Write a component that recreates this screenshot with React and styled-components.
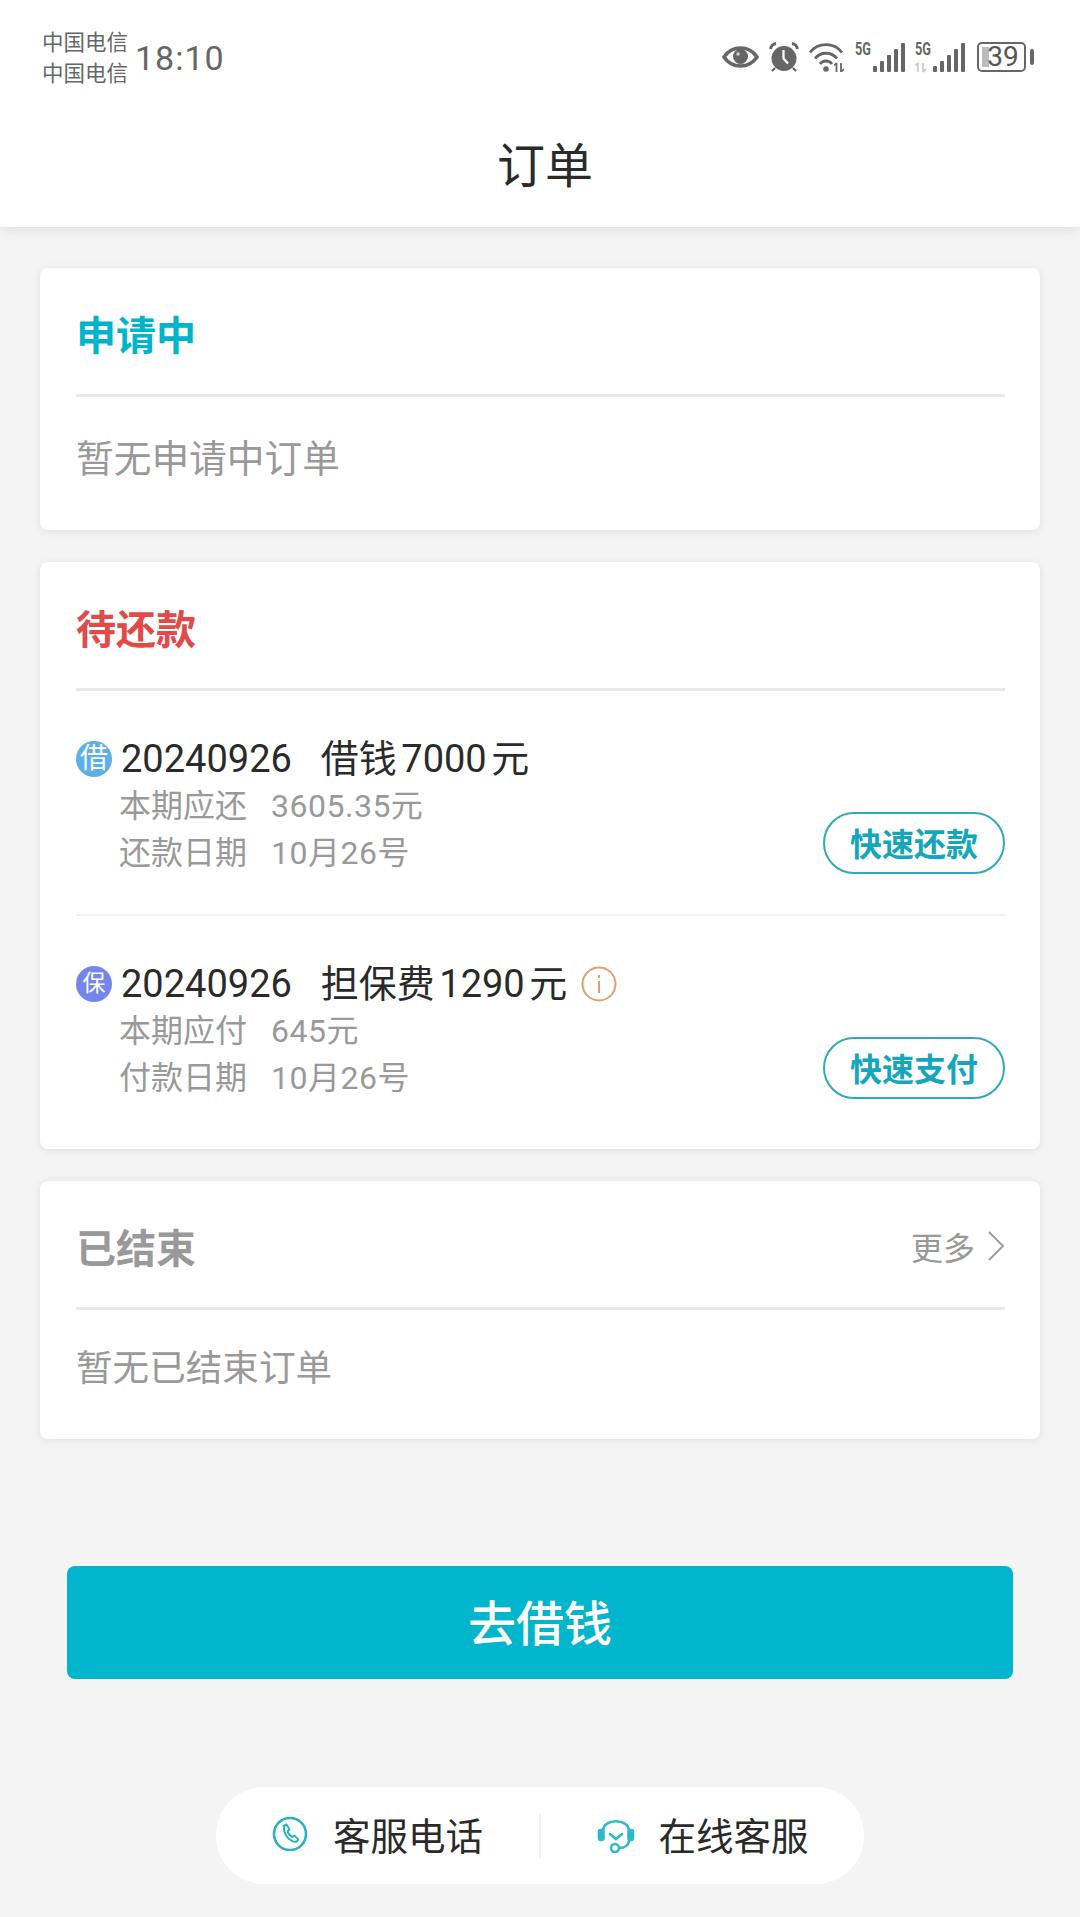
import React from 'react';
import styled, { createGlobalStyle } from 'styled-components';

const GlobalStyle = createGlobalStyle`
  html, body {
    margin: 0;
    padding: 0;
    background-color: #f4f4f4;
    font-family: Roboto, "Noto Sans CJK SC", sans-serif;
  }
  * {
    box-sizing: border-box;
  }
`;

const Page = styled.div`
  width: 1080px;
  height: 1917px;
  overflow: hidden;
  background-color: #f4f4f4;
`;

const Header = styled.header`
  height: 227px;
  background-color: #fff;
  box-shadow: 0 2px 12px rgba(0, 0, 0, 0.1);
`;

const StatusBar = styled.div`
  height: 127px;
  padding: 27px 46px 0 42px;
  display: flex;
  justify-content: space-between;
  align-items: flex-start;
`;

const StatusLeft = styled.div`
  display: flex;
  align-items: center;
  gap: 7px;
  color: #666;
`;

const Carrier = styled.div`
  font-size: 21.5px;
  line-height: 31px;
`;

const Clock = styled.div`
  font-size: 34px;
  letter-spacing: 1px;
`;

const StatusRight = styled.div`
  display: flex;
  align-items: center;
  gap: 10px;
  margin-top: 15px;
  color: #666;
`;

const StatusSvg = styled.svg`
  overflow: visible;
`;

const PageTitle = styled.h1`
  margin: 0;
  height: 80px;
  line-height: 80px;
  text-align: center;
  font-size: 48px;
  font-weight: 400;
  color: #2a2a2a;
  padding-left: 10px;
`;

const Content = styled.main`
  padding: 41px 40px 0;
  display: flex;
  flex-direction: column;
  gap: 32px;
`;

const Card = styled.section`
  background-color: #fff;
  border-radius: 8px;
  padding: 0 35px 0 36px;
  box-shadow: 0 1px 10px rgba(0, 0, 0, 0.09);
`;

const CardHead = styled.div`
  height: 129px;
  padding-top: 4px;
  display: flex;
  justify-content: space-between;
  align-items: center;
  border-bottom: 3px solid #e8e8e8;
`;

const CardTitle = styled.h2`
  margin: 0;
  font-size: 40px;
  font-weight: 700;
  color: ${({ $color }) => $color};
`;

const EmptyText = styled.div`
  height: ${({ $height }) => $height}px;
  margin-bottom: ${({ $bottom }) => $bottom}px;
  line-height: ${({ $height }) => $height}px;
  font-size: ${({ $size }) => $size}px;
  color: #999;
`;

const EmptyFoot = styled.div`
  display: flow-root;
`;

const More = styled.div`
  display: flex;
  align-items: center;
  gap: 12px;
  font-size: 32px;
  color: #999;
`;

const OrderRow = styled.div`
  padding: 45px 0 ${({ $last }) => ($last ? 47 : 37)}px;
  display: flex;
  justify-content: space-between;
  align-items: flex-end;
  border-bottom: ${({ $last }) => ($last ? 'none' : '2px solid #f1f1f1')};
`;

const OrderLine = styled.div`
  display: flex;
  align-items: center;
  height: 46px;
  margin-bottom: 1px;
`;

const OrderText = styled.span`
  font-size: 38px;
  line-height: 46px;
  color: #2a2a2a;
  white-space: pre;
  word-spacing: -5px;
`;

const Badge = styled.span`
  width: 36px;
  height: 36px;
  margin-right: 9px;
  border-radius: 50%;
  background-color: ${({ $color }) => $color};
  color: #fff;
  font-size: ${({ $size }) => $size}px;
  line-height: 36px;
  text-align: center;
`;

const OrderGap = styled.span`
  display: inline-block;
  width: 29px;
`;

const InfoIcon = styled.svg`
  width: 36px;
  height: 36px;
  margin-left: 14px;
`;

const SubLine = styled.div`
  margin-left: 43px;
  height: 47px;
  line-height: 47px;
  font-size: 32px;
  color: #999;
  white-space: pre;
`;

const SubValue = styled.span`
  margin-left: 24px;
  letter-spacing: 0.5px;
`;

const OutlineButton = styled.button`
  width: 182px;
  height: 62px;
  margin-bottom: 3px;
  padding: 0 0 3px;
  background-color: #fff;
  border: 2px solid #2fa9b8;
  border-radius: 31px;
  color: #14a6ba;
  font-family: inherit;
  font-size: 32px;
  font-weight: 700;
`;

const PrimaryButton = styled.button`
  display: block;
  width: 946px;
  height: 113px;
  margin: 127px 0 0 67px;
  padding: 0 0 6px;
  background-color: #00b5cc;
  border: none;
  border-radius: 8px;
  color: #fff;
  font-family: inherit;
  font-size: 48px;
  font-weight: 500;
`;

const ContactPill = styled.nav`
  width: 648px;
  height: 97px;
  margin: 108px 0 0 216px;
  display: flex;
  align-items: center;
  background-color: #fff;
  border-radius: 48px;
`;

const ContactItem = styled.div`
  flex: 1;
  display: flex;
  align-items: center;
  justify-content: center;
  gap: ${({ $gap }) => $gap}px;
  padding-bottom: 4px;
  font-size: 37.5px;
  color: #2a2a2a;
`;

const ContactDivider = styled.div`
  width: 2px;
  height: 44px;
  background-color: #f1f1f1;
`;

const PhoneIcon = () => (
  <svg width="36" height="36" viewBox="0 0 36 36" fill="none" stroke="#2cb0bd" strokeWidth="2.6">
    <circle cx="18" cy="18" r="16" />
    <path d="M11.5 10l3-1.6 3 5-1.9 1.8c.7 2.6 2.7 4.8 4.8 5.8l2-1.4 3.9 3.8-1.8 2.4c-6 .6-14.4-8-12-15.8z" strokeWidth="2" strokeLinejoin="round" />
  </svg>
);

const HeadsetIcon = () => (
  <svg width="38" height="38" viewBox="0 0 38 38" fill="none" stroke="#2cb9c8" strokeWidth="2.6" strokeLinecap="round">
    <path d="M6 16C6 3 32 3 32 16" />
    <rect x="2" y="15" width="4.5" height="10" rx="2" fill="#2cb9c8" />
    <rect x="31.5" y="15" width="4.5" height="10" rx="2" fill="#2cb9c8" />
    <path d="M13 19l6 5 6-5" />
    <path d="M32 25c0 5-4 8-9 8" />
    <circle cx="18" cy="33" r="4" />
  </svg>
);

const ChevronIcon = () => (
  <svg width="18" height="32" viewBox="0 0 18 32" fill="none" stroke="#999" strokeWidth="1.8">
    <path d="M2 2l14 14L2 30" />
  </svg>
);

const EyeIcon = () => (
  <svg width="37" height="24" viewBox="0 0 37 24">
    <path d="M2 12C10 0 27 0 35 12C27 24 10 24 2 12z" fill="none" stroke="#666" strokeWidth="3.6" />
    <circle cx="18.5" cy="11.5" r="7.5" fill="#666" />
    <circle cx="16" cy="9" r="1.8" fill="#ccc" />
  </svg>
);

const AlarmIcon = () => (
  <svg width="30" height="30" viewBox="0 0 30 30">
    <circle cx="15" cy="16.5" r="12.5" fill="#666" />
    <path d="M14.5 8v8.5l4.5 5" fill="none" stroke="#fff" strokeWidth="2.2" />
    <path d="M1.5 7C2 4 4 2 7 1.5M28.5 7C28 4 26 2 23 1.5" stroke="#666" strokeWidth="3" fill="none" />
    <path d="M6 26l-3 3M24 26l3 3" stroke="#666" strokeWidth="2.4" fill="none" />
  </svg>
);

const WifiIcon = () => (
  <svg width="36" height="30" viewBox="0 0 36 30" fill="none" stroke="#666" strokeWidth="2.8">
    <path d="M1 10.5C9 0 25 0 33 10.5" />
    <path d="M6 16.5C11.5 9.5 22.5 9.5 28 16.5" />
    <path d="M11 22C14 18 20 18 23 22" />
    <circle cx="17" cy="27" r="2.8" fill="#666" stroke="none" />
    <path d="M27.5 21v9M32 21v9" strokeWidth="1.8" />
    <path d="M25 23.5l2.5-2.5M32 30l3-3" strokeWidth="1.6" />
  </svg>
);

const SignalIcon = ({ dimmed }) => (
  <StatusSvg width="50" height="30" viewBox="0 0 50 30">
    <text x="0" y="13" fontSize="18" fontWeight="700" fill="#666" fontFamily="Roboto, sans-serif" textLength="16" lengthAdjust="spacingAndGlyphs">5G</text>
    {dimmed && <path d="M3 21v9M8 21v9M0.5 23.5L3 21M8 30l3-3" stroke="#ccc" strokeWidth="1.8" fill="none" />}
    {[[18, 24], [25, 19], [32, 13], [39, 7], [46, 1]].map(([x, y]) => (
      <rect key={x} x={x} y={y} width="4" height={30 - y} rx="1" fill="#666" />
    ))}
  </StatusSvg>
);

const BatteryBox = styled.div`
  position: relative;
  width: 49px;
  height: 30px;
  margin-left: 2px;
  padding-left: 3px;
  border: 2.5px solid #666;
  border-radius: 5px;
  font-size: 28px;
  line-height: 25px;
  text-align: center;
  color: #555;
`;

const BatteryFill = styled.span`
  position: absolute;
  left: 3px;
  top: 3px;
  bottom: 3px;
  width: 7px;
  background-color: #bbb;
`;

const BatteryLevel = styled.span`
  position: relative;
`;

const BatteryTip = styled.span`
  width: 4px;
  height: 16px;
  margin-left: -6px;
  border-radius: 2px;
  background-color: #666;
`;

const SubLines = ({ rows }) =>
  rows.map(([label, value]) => (
    <SubLine key={label}>
      {label}
      <SubValue>{value}</SubValue>
    </SubLine>
  ));

const App = () => {
  return (
    <Page>
      <GlobalStyle />
      <Header>
        <StatusBar>
          <StatusLeft>
            <Carrier>
              中国电信
              <br />
              中国电信
            </Carrier>
            <Clock>18:10</Clock>
          </StatusLeft>
          <StatusRight>
            <EyeIcon />
            <AlarmIcon />
            <WifiIcon />
            <SignalIcon />
            <SignalIcon dimmed />
            <BatteryBox>
              <BatteryFill />
              <BatteryLevel>39</BatteryLevel>
            </BatteryBox>
            <BatteryTip />
          </StatusRight>
        </StatusBar>
        <PageTitle>订单</PageTitle>
      </Header>

      <Content>
        <Card>
          <CardHead>
            <CardTitle $color="#00b4cb">申请中</CardTitle>
          </CardHead>
          <EmptyFoot>
            <EmptyText $height={124} $bottom={9} $size={37.7}>暂无申请中订单</EmptyText>
          </EmptyFoot>
        </Card>

        <Card>
          <CardHead>
            <CardTitle $color="#e24a4a">待还款</CardTitle>
          </CardHead>
          <OrderRow>
            <div>
              <OrderLine>
                <Badge $color="#5cb0e6" $size={28}>借</Badge>
                <OrderText>
                  20240926
                  <OrderGap />
                  借钱 7000 元
                </OrderText>
              </OrderLine>
              <SubLines rows={[['本期应还', '3605.35元'], ['还款日期', '10月26号']]} />
            </div>
            <OutlineButton>快速还款</OutlineButton>
          </OrderRow>
          <OrderRow $last>
            <div>
              <OrderLine>
                <Badge $color="#7486ec" $size={23}>保</Badge>
                <OrderText>
                  20240926
                  <OrderGap />
                  担保费 1290 元
                </OrderText>
                <InfoIcon viewBox="0 0 36 36" fill="none" stroke="#e0a070" strokeWidth="2">
                  <circle cx="18" cy="18" r="16.5" />
                  <path d="M18 15v12M18 9v3" />
                </InfoIcon>
              </OrderLine>
              <SubLines rows={[['本期应付', '645元'], ['付款日期', '10月26号']]} />
            </div>
            <OutlineButton>快速支付</OutlineButton>
          </OrderRow>
        </Card>

        <Card>
          <CardHead>
            <CardTitle $color="#999">已结束</CardTitle>
            <More>
              更多
              <ChevronIcon />
            </More>
          </CardHead>
          <EmptyFoot>
            <EmptyText $height={118} $bottom={11} $size={36.6}>暂无已结束订单</EmptyText>
          </EmptyFoot>
        </Card>
      </Content>

      <PrimaryButton>去借钱</PrimaryButton>

      <ContactPill>
        <ContactItem $gap={25}>
          <PhoneIcon />
          客服电话
        </ContactItem>
        <ContactDivider />
        <ContactItem $gap={24}>
          <HeadsetIcon />
          在线客服
        </ContactItem>
      </ContactPill>
    </Page>
  );
};

export default App;
